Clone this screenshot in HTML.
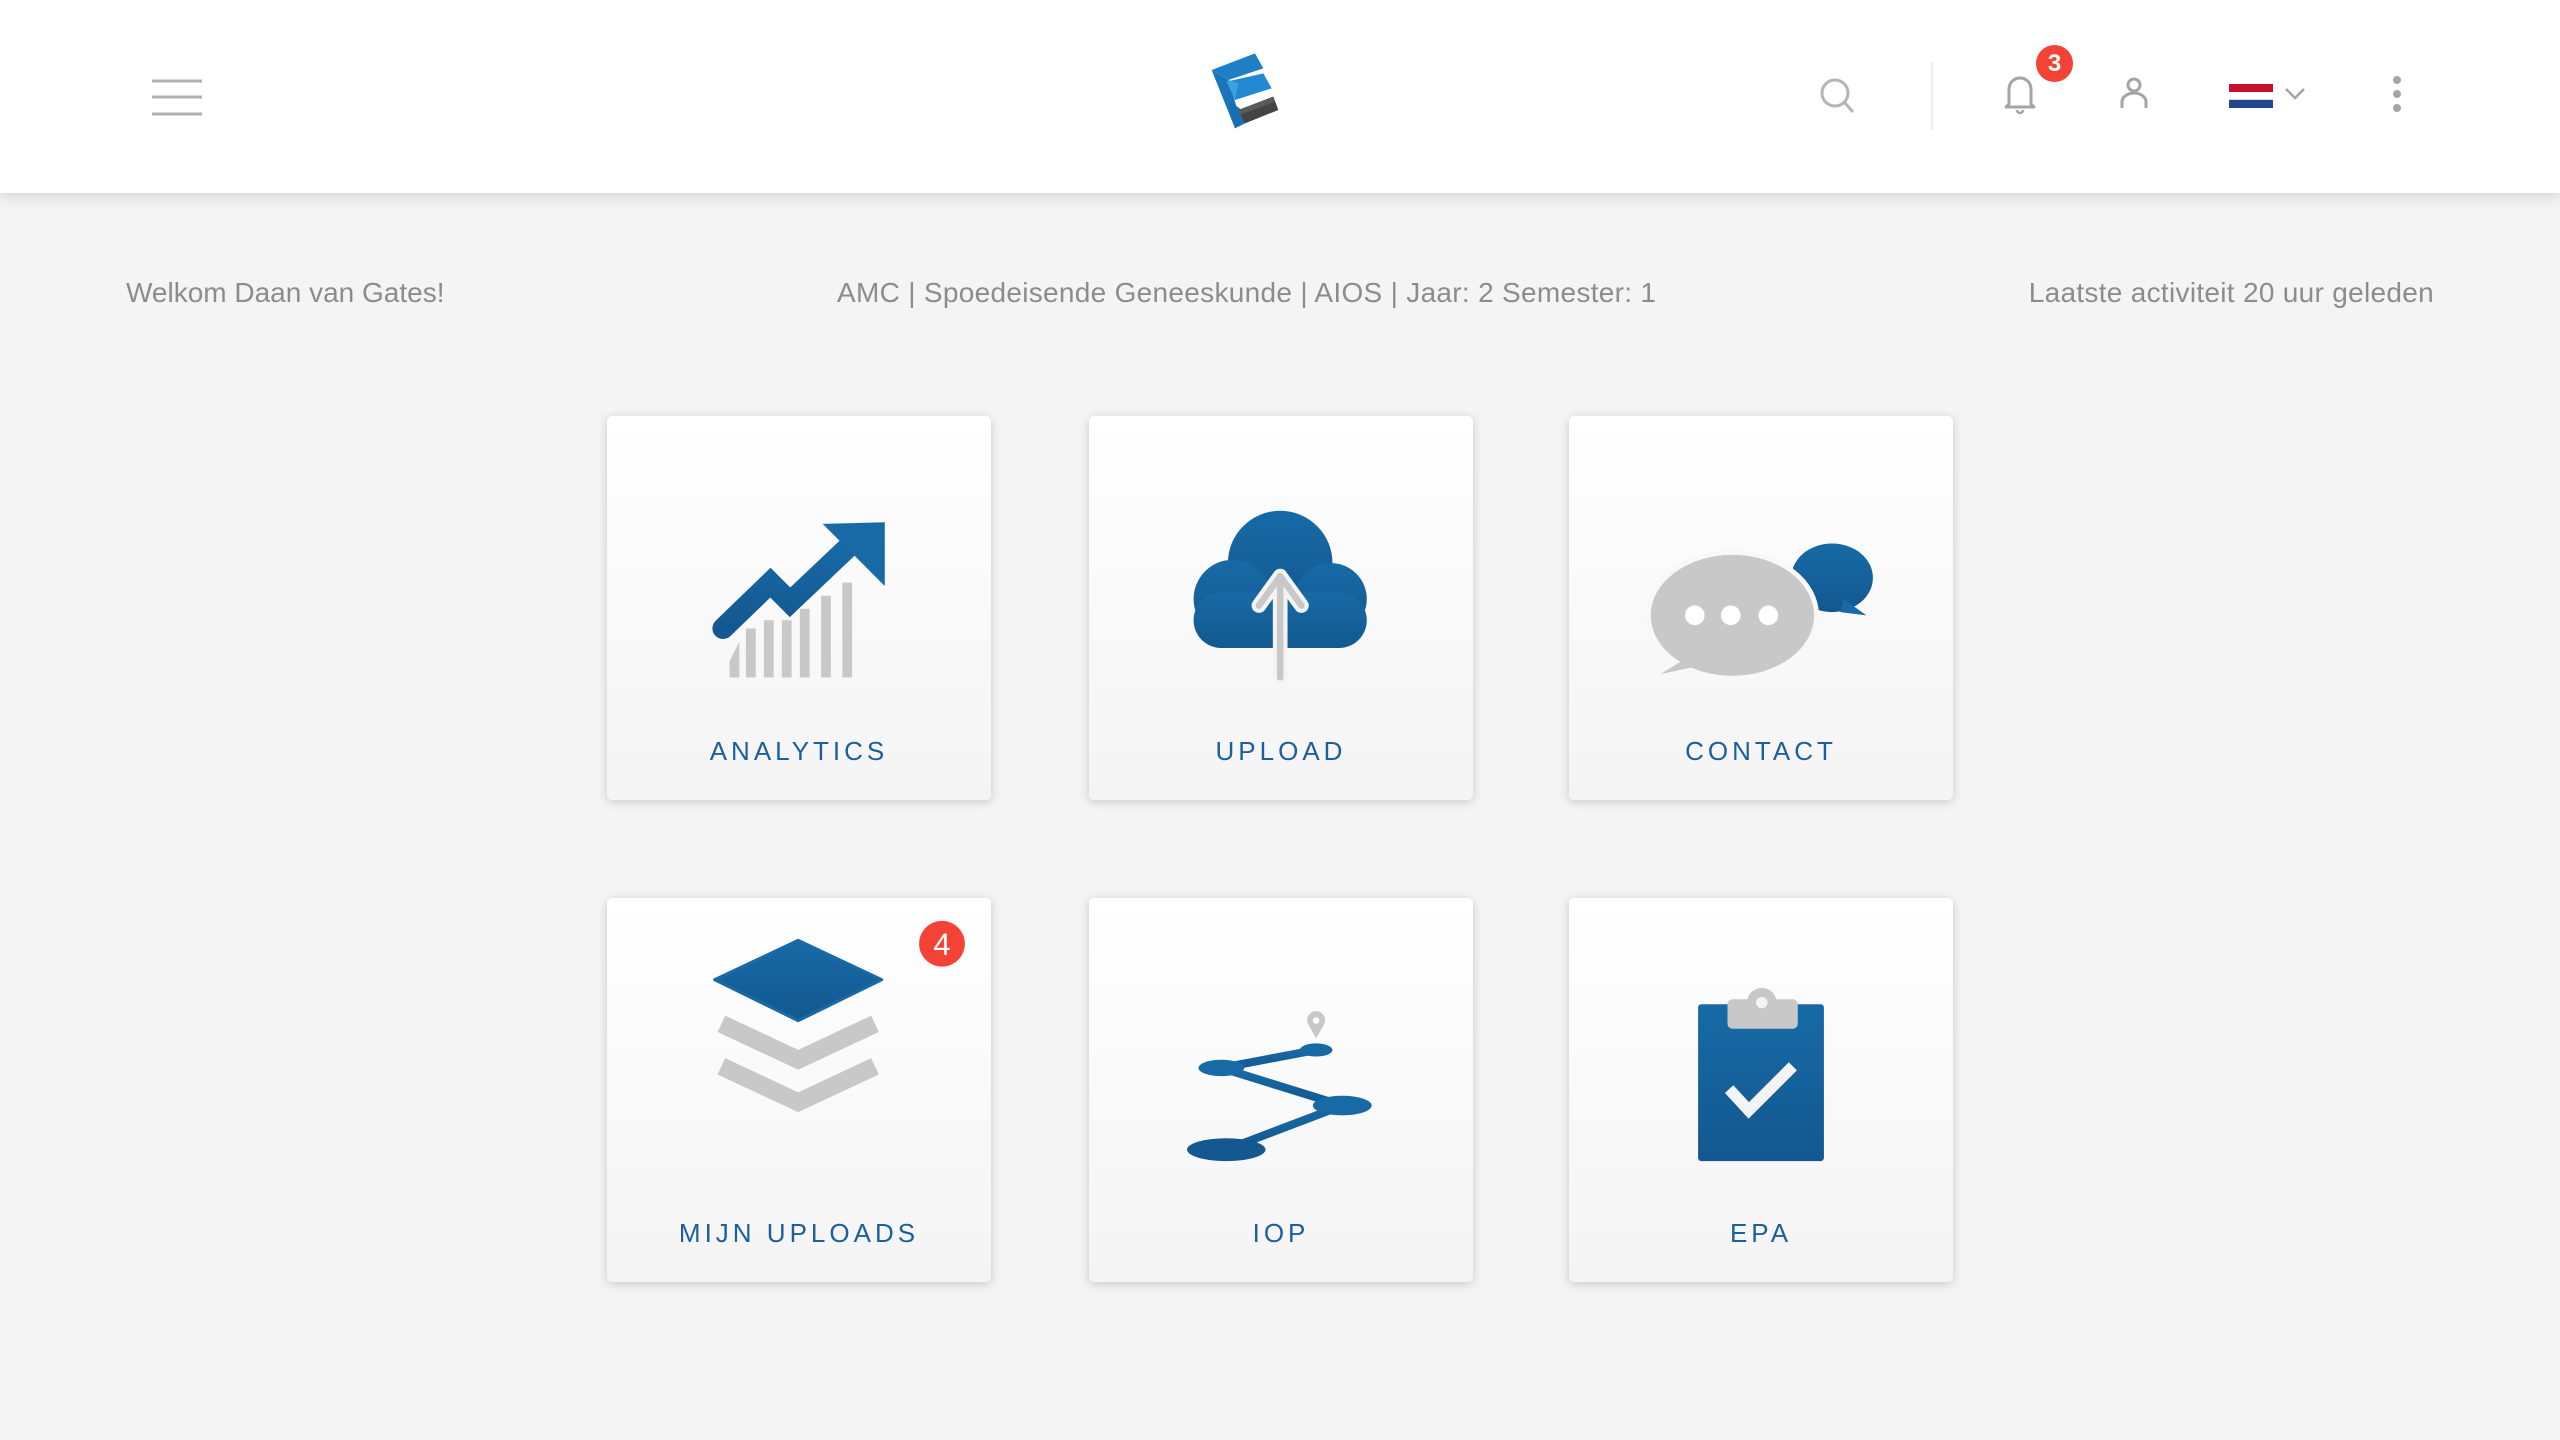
<!DOCTYPE html>
<html><head><meta charset="utf-8"><style>
*{margin:0;padding:0;box-sizing:border-box}
body{width:2560px;height:1440px;background:#f4f4f4;font-family:"Liberation Sans",sans-serif;position:relative;overflow:hidden}
.hdr{position:absolute;left:0;top:0;width:2560px;height:193px;background:#fff;box-shadow:0 4px 12px rgba(0,0,0,.12)}
.abs{position:absolute}
.info{position:absolute;top:277px;font-size:28px;color:#8c8c8c;white-space:nowrap}
.card{position:absolute;width:384px;height:384px;border-radius:5px;background:linear-gradient(#fff,#f4f4f4);box-shadow:0 2px 10px rgba(0,0,0,.18)}
.card svg{position:absolute;left:0;top:0;width:384px;height:384px}
.lbl{position:absolute;left:0;width:384px;top:320px;text-align:center;font-size:26px;letter-spacing:4px;color:#1b5f9c}
</style></head><body>
<div class="hdr">
 <svg class="abs" style="left:150px;top:78px" width="54" height="40"><g stroke="#b0b0b0" stroke-width="3"><line x1="2" y1="3" x2="52" y2="3"/><line x1="2" y1="19" x2="52" y2="19"/><line x1="2" y1="36" x2="52" y2="36"/></g></svg>
 <svg class="abs" style="left:1195px;top:40px" width="110" height="100" viewBox="0 0 330 300">
  <polygon points="50,90 180,40 205,85 100,120" fill="#1f7fc6"/>
  <polygon points="50,90 100,120 140,250 120,265" fill="#1a74b8"/>
  <polygon points="95,125 205,100 230,145 120,180" fill="#2288d0"/>
  <polygon points="100,180 140,210 150,250 120,265" fill="#1a6fb0"/>
  <polygon points="100,120 130,130 120,180 95,125" fill="#3da0e0"/>
  <polygon points="130,210 235,170 250,210 150,250" fill="#444"/>
  <polygon points="130,210 235,170 240,185 135,225" fill="#5a5a5a"/>
 </svg>
 <svg class="abs" style="left:1818px;top:76px" width="40" height="40"><circle cx="17" cy="17" r="13" fill="none" stroke="#b5b5b5" stroke-width="3"/><line x1="27" y1="27" x2="35" y2="36" stroke="#b5b5b5" stroke-width="3"/></svg>
 <div class="abs" style="left:1931px;top:62px;width:2px;height:68px;background:#eee"></div>
 <svg class="abs" style="left:2000px;top:72px" width="40" height="44"><path d="M9 32 V17 a11 11 0 0 1 22 0 V32 L34 35 H6 Z" fill="none" stroke="#a5a5a5" stroke-width="3" stroke-linejoin="round"/><path d="M17 38 a3 3 0 0 0 6 0" fill="none" stroke="#a5a5a5" stroke-width="2.5"/></svg>
 <div class="abs" style="left:2036px;top:45px;width:37px;height:37px;border-radius:50%;background:#f44336;color:#fff;font-size:24px;font-weight:bold;text-align:center;line-height:37px">3</div>
 <svg class="abs" style="left:2118px;top:76px" width="32" height="34"><circle cx="16" cy="9" r="6" fill="none" stroke="#a5a5a5" stroke-width="3"/><path d="M4 32 V26 a12 9 0 0 1 24 0 V32" fill="none" stroke="#a5a5a5" stroke-width="3"/></svg>
 <div class="abs" style="left:2229px;top:84px;width:44px;height:8px;background:#c8102e"></div>
 <div class="abs" style="left:2229px;top:92px;width:44px;height:8px;background:#fff;border-bottom:1px solid #ddd"></div>
 <div class="abs" style="left:2229px;top:100px;width:44px;height:8px;background:#21468b"></div>
 <svg class="abs" style="left:2284px;top:86px" width="22" height="16"><polyline points="2,3 11,12 20,3" fill="none" stroke="#a5a5a5" stroke-width="2.5"/></svg>
 <svg class="abs" style="left:2390px;top:74px" width="14" height="40"><circle cx="7" cy="6" r="4" fill="#a5a5a5"/><circle cx="7" cy="20" r="4" fill="#a5a5a5"/><circle cx="7" cy="34" r="4" fill="#a5a5a5"/></svg>
</div>
<div class="info" style="left:126px">Welkom Daan van Gates!</div>
<div class="info" style="left:837px;letter-spacing:0.3px">AMC | Spoedeisende Geneeskunde | AIOS | Jaar: 2 Semester: 1</div>
<div class="info" style="right:126px;letter-spacing:0.3px">Laatste activiteit 20 uur geleden</div>

<svg width="0" height="0" style="position:absolute"><defs><linearGradient id="bl" x1="0" y1="0" x2="0" y2="1"><stop offset="0" stop-color="#176aa6"/><stop offset="1" stop-color="#135890"/></linearGradient></defs></svg>

<div class="card" style="left:607px;top:416px">
 <svg viewBox="0 0 235 235">
  <g fill="#c8c8c8">
   <polygon points="75,160 75,150 81,138 81,160"/>
   <rect x="85" y="130" width="6" height="30"/><rect x="96" y="125" width="6" height="35"/><rect x="107" y="125" width="6" height="35"/>
   <rect x="118" y="118" width="6" height="42"/><rect x="131" y="110" width="6" height="50"/><rect x="144" y="102" width="6" height="58"/>
  </g>
  <polyline points="71,130 100,102 112,114 150,78" fill="none" stroke="url(#bl)" stroke-width="13" stroke-linecap="round" stroke-linejoin="miter"/>
  <polygon points="132,66 170,65 170,104" fill="#176aa6"/>
 </svg>
 <div class="lbl">ANALYTICS</div>
</div>
<div class="card" style="left:1089px;top:416px">
 <svg viewBox="0 0 235 235">
  <g fill="url(#bl)"><circle cx="117" cy="90" r="32"/><circle cx="88" cy="112" r="24"/><circle cx="148" cy="112" r="22"/><rect x="64" y="108" width="106" height="34" rx="17"/></g>
  <path d="M117 160 V98 M104 116 L117 98 L130 116" fill="none" stroke="#f4f4f4" stroke-width="9" stroke-linecap="round" stroke-linejoin="round"/>
  <path d="M117 160 V98 M104 116 L117 98 L130 116" fill="none" stroke="#c8c8c8" stroke-width="4" stroke-linecap="round" stroke-linejoin="round"/>
 </svg>
 <div class="lbl">UPLOAD</div>
</div>
<div class="card" style="left:1569px;top:416px">
 <svg viewBox="0 0 235 235">
  <ellipse cx="161" cy="99" rx="25" ry="21" fill="url(#bl)"/>
  <path d="M168 112 L182 122 L166 120 Z" fill="#176aa6"/>
  <ellipse cx="100" cy="122" rx="53" ry="40" fill="#f8f8f8"/>
  <ellipse cx="100" cy="122" rx="50" ry="37" fill="#c8c8c8"/>
  <path d="M72 148 L56 158 L84 152 Z" fill="#c8c8c8"/>
  <g fill="#fff"><circle cx="77" cy="122" r="6"/><circle cx="99" cy="122" r="6"/><circle cx="122" cy="122" r="6"/></g>
 </svg>
 <div class="lbl">CONTACT</div>
</div>
<div class="card" style="left:607px;top:898px">
 <svg viewBox="0 0 235 235">
  <polyline points="70,77 117,99 164,77" fill="none" stroke="#c8c8c8" stroke-width="11" stroke-linejoin="miter"/>
  <polyline points="70,103 117,125 164,103" fill="none" stroke="#c8c8c8" stroke-width="11" stroke-linejoin="miter"/>
  <polygon points="117,26 168,50 117,75 66,50" fill="url(#bl)" stroke="#176aa6" stroke-width="2" stroke-linejoin="round"/>
  <circle cx="205" cy="28" r="14" fill="#f44336"/>
  <text x="205" y="35" font-size="19" fill="#fff" text-anchor="middle" font-family="Liberation Sans">4</text>
 </svg>
 <div class="lbl">MIJN UPLOADS</div>
</div>
<div class="card" style="left:1089px;top:898px">
 <svg viewBox="0 0 235 235">
  <path d="M139 86 L134 77 a5.5 5.5 0 1 1 10 0 Z" fill="#c8c8c8"/><circle cx="139" cy="75" r="2" fill="#fff"/>
  <g stroke="url(#bl)" stroke-width="5" fill="none"><line x1="139" y1="93" x2="81" y2="104"/><line x1="81" y1="104" x2="155" y2="127"/><line x1="155" y1="127" x2="84" y2="154"/></g>
  <g fill="#176aa6"><ellipse cx="139" cy="93" rx="10" ry="4"/><ellipse cx="81" cy="104" rx="14" ry="5"/><ellipse cx="155" cy="127" rx="18" ry="6"/><ellipse cx="84" cy="154" rx="24" ry="7" fill="#135890"/></g>
 </svg>
 <div class="lbl">IOP</div>
</div>
<div class="card" style="left:1569px;top:898px">
 <svg viewBox="0 0 235 235">
  <rect x="79" y="65" width="77" height="96" rx="2" fill="url(#bl)"/>
  <circle cx="118" cy="64" r="9" fill="#c8c8c8"/>
  <rect x="97" y="62" width="43" height="18" rx="3" fill="#c8c8c8"/>
  <circle cx="118" cy="64" r="3.5" fill="#f4f4f4"/>
  <polyline points="98,117 110,130 137,103" fill="none" stroke="#f4f4f4" stroke-width="7"/>
 </svg>
 <div class="lbl">EPA</div>
</div>
</body></html>
